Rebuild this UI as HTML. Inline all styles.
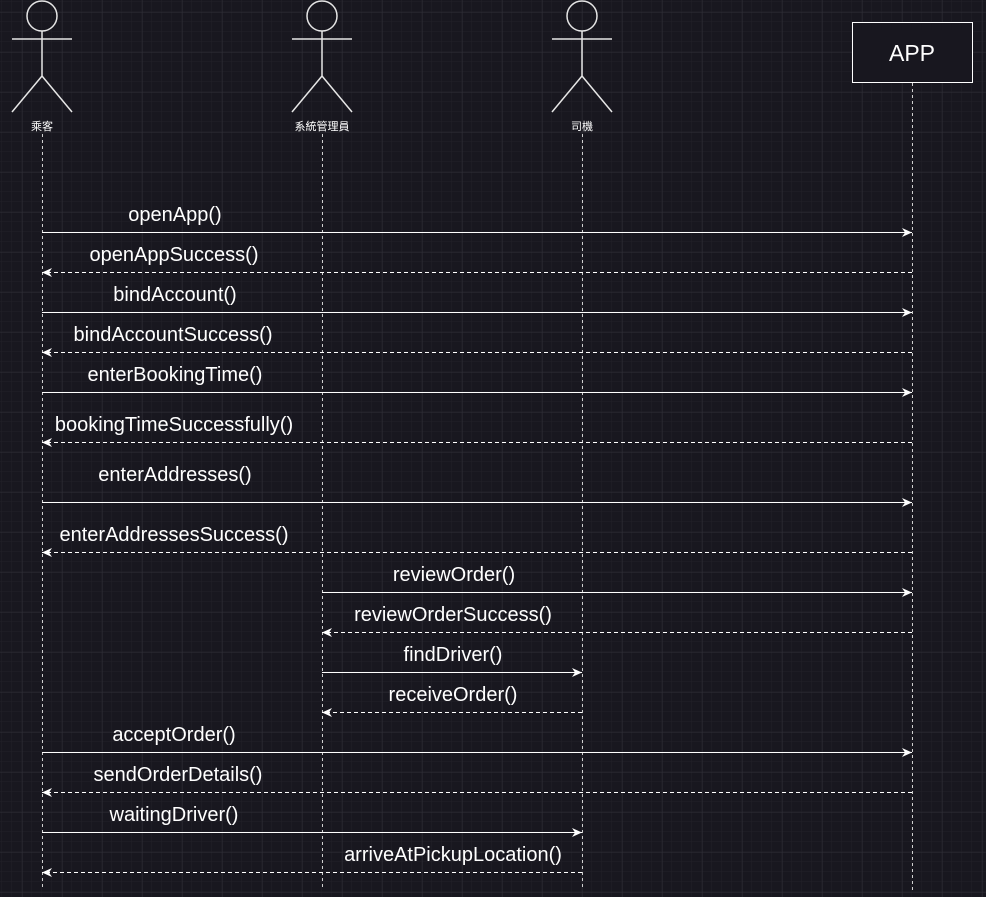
<!DOCTYPE html>
<html><head><meta charset="utf-8"><style>
html,body{margin:0;padding:0;background:#18171f;}
svg{display:block;}
text{font-family:"Liberation Sans","Noto Sans CJK TC",sans-serif;fill:#fff;}
</style></head><body>
<svg width="986" height="897" viewBox="0 0 986 897" xmlns="http://www.w3.org/2000/svg">
<defs>
<pattern id="mn" width="10" height="10" patternUnits="userSpaceOnUse" x="2" y="2">
<path d="M10 0V10M0 10H10" stroke="#222129" stroke-width="1" fill="none"/>
</pattern>
<pattern id="mj" width="40" height="40" patternUnits="userSpaceOnUse" x="22.5" y="12.5">
<path d="M0 0V40M0 0H40" stroke="#302f37" stroke-width="1" fill="none"/>
</pattern>
<marker id="ah" markerWidth="12" markerHeight="12" refX="10" refY="6" orient="auto" markerUnits="userSpaceOnUse">
<path d="M0 1.5L10 6L0 10.5L3 6Z" fill="#fff"/>
</marker>
</defs>
<rect width="986" height="897" fill="#18171f"/>
<rect width="986" height="897" fill="url(#mn)"/>
<rect width="986" height="897" fill="url(#mj)"/>
<g stroke="#e6e6e6" stroke-width="1.5" fill="none">
<g><circle cx="42" cy="16" r="15"/><path d="M42 31V76M12 39H72M42 76L12 112M42 76L72 112"/></g>
<g transform="translate(280,0)"><circle cx="42" cy="16" r="15"/><path d="M42 31V76M12 39H72M42 76L12 112M42 76L72 112"/></g>
<g transform="translate(540,0)"><circle cx="42" cy="16" r="15"/><path d="M42 31V76M12 39H72M42 76L12 112M42 76L72 112"/></g>
</g>
<text x="42" y="130" font-size="11" text-anchor="middle">乘客</text>
<text x="322" y="130" font-size="11" text-anchor="middle">系統管理員</text>
<text x="582" y="130" font-size="11" text-anchor="middle">司機</text>
<rect x="852.5" y="22.5" width="120" height="60" fill="#18171f" stroke="#fff" stroke-width="1"/>
<text x="912" y="61" font-size="23" text-anchor="middle">APP</text>
<g stroke="#cfcfcf" stroke-width="1" stroke-dasharray="3,3">
<path d="M42.5 134V890M322.5 134V890M582.5 134V890M912.5 83V890"/>
</g>
<g stroke="#fff" stroke-width="1" fill="none" marker-end="url(#ah)">
<path d="M42 232.5H912"/>
<path d="M912 272.5H42" stroke-dasharray="4,3"/>
<path d="M42 312.5H912"/>
<path d="M912 352.5H42" stroke-dasharray="4,3"/>
<path d="M42 392.5H912"/>
<path d="M912 442.5H42" stroke-dasharray="4,3"/>
<path d="M42 502.5H912"/>
<path d="M912 552.5H42" stroke-dasharray="4,3"/>
<path d="M322 592.5H912"/>
<path d="M912 632.5H322" stroke-dasharray="4,3"/>
<path d="M322 672.5H582"/>
<path d="M582 712.5H322" stroke-dasharray="4,3"/>
<path d="M42 752.5H912"/>
<path d="M912 792.5H42" stroke-dasharray="4,3"/>
<path d="M42 832.5H582"/>
<path d="M582 872.5H42" stroke-dasharray="4,3"/>
</g>
<g font-size="20" text-anchor="middle">
<text x="175" y="221">openApp()</text>
<text x="174" y="261">openAppSuccess()</text>
<text x="175" y="301">bindAccount()</text>
<text x="173" y="341">bindAccountSuccess()</text>
<text x="175" y="381">enterBookingTime()</text>
<text x="174" y="431">bookingTimeSuccessfully()</text>
<text x="175" y="481">enterAddresses()</text>
<text x="174" y="541">enterAddressesSuccess()</text>
<text x="454" y="581">reviewOrder()</text>
<text x="453" y="621">reviewOrderSuccess()</text>
<text x="453" y="661">findDriver()</text>
<text x="453" y="701">receiveOrder()</text>
<text x="174" y="741">acceptOrder()</text>
<text x="178" y="781">sendOrderDetails()</text>
<text x="174" y="821">waitingDriver()</text>
<text x="453" y="861">arriveAtPickupLocation()</text>
</g>
</svg>
</body></html>
